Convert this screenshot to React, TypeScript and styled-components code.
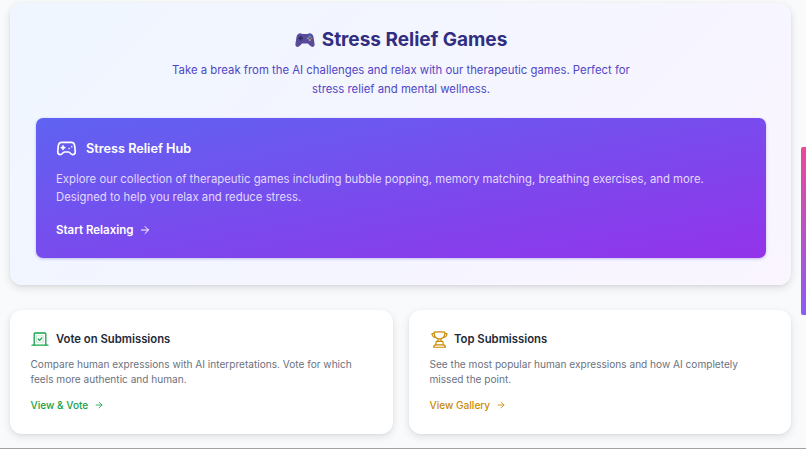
import React from 'react';
import { ArrowRight, Gamepad2 } from 'lucide-react';
import { HiOutlineTrophy } from 'react-icons/hi2';
import styled, { createGlobalStyle } from 'styled-components';

const GlobalStyle = createGlobalStyle`
  html, body {
    margin: 0;
    height: 100%;
    overflow: hidden;
    background: #f9fafb;
  }

  body {
    font-family: Inter, "Liberation Sans", sans-serif;
    -webkit-font-smoothing: antialiased;
  }

  * {
    box-sizing: border-box;
  }
`;

const Page = styled.div`
  position: relative;
  width: 806px;
  height: 449px;
  padding: 3px 15px 0 10px;
  border-bottom: 1px solid #a3a3a3;
  overflow: hidden;
`;

const Hero = styled.section`
  height: 282px;
  padding: 24px 25px 0 26px;
  border-radius: 12px;
  background: linear-gradient(135deg, #eff6ff 0%, #faf5ff 100%);
  box-shadow: 0 3px 8px rgba(15, 23, 42, 0.12), 0 1px 3px rgba(15, 23, 42, 0.06);
`;

const HeroHeader = styled.header`
  display: flex;
  flex-direction: column;
  align-items: center;
  text-align: center;
`;

const HeroTitle = styled.h1`
  display: flex;
  align-items: center;
  gap: 7px;
  margin: 0;
  color: #312e81;
  font-size: 19px;
  line-height: 26px;
  font-weight: 700;
`;

const HeroText = styled.p`
  width: 480px;
  margin: 8px 0 0;
  color: #4f46c5;
  font-size: 11.35px;
  line-height: 18.5px;
`;

const HubCard = styled.a`
  display: block;
  height: 140px;
  margin-top: 20px;
  padding: 20px;
  border-radius: 7px;
  color: #fff;
  background: linear-gradient(to bottom right, #5f63f1 0%, #9333ea 100%);
  box-shadow: 0 1px 3px rgba(67, 56, 202, 0.3);
`;

const CardHead = styled.div<{ $gap: number }>`
  display: flex;
  align-items: center;
  gap: ${({ $gap }) => $gap}px;
`;

const HubTitle = styled.h2`
  margin: 0;
  font-size: 12.7px;
  line-height: 20px;
  font-weight: 600;
`;

const HubText = styled.p`
  margin: 10.5px 0 0;
  color: #e2d9fd;
  font-size: 11.35px;
  line-height: 18px;
`;

const HubLink = styled.span`
  display: flex;
  align-items: center;
  gap: 6px;
  margin-top: 15.5px;
  font-size: 11.5px;
  line-height: 18px;
  font-weight: 600;
`;

const CardGrid = styled.div`
  display: grid;
  grid-template-columns: 383px 382px;
  gap: 16px;
  margin-top: 25px;
`;

const InfoCard = styled.article`
  height: 124px;
  padding: 19px 20px 19px 20.5px;
  border-radius: 12px;
  background: #fff;
  box-shadow: 0 3px 8px rgba(15, 23, 42, 0.1), 0 1px 3px rgba(15, 23, 42, 0.05);
`;

const InfoTitle = styled.h3`
  margin: 0;
  color: #1f2937;
  font-size: 11.3px;
  line-height: 20px;
  font-weight: 600;
`;

const InfoText = styled.p`
  margin: 8px 0 0;
  color: #6b7280;
  font-size: 10.1px;
  line-height: 15.3px;
`;

const InfoLink = styled.span<{ $color: string }>`
  display: flex;
  align-items: center;
  gap: 5.5px;
  margin-top: 9px;
  color: ${({ $color }) => $color};
  font-size: 10.1px;
  line-height: 16px;
  font-weight: 500;
`;

const ScrollThumb = styled.div`
  position: absolute;
  top: 147px;
  right: 0;
  width: 5px;
  height: 168px;
  border-radius: 2px 0 0 2px;
  background: linear-gradient(180deg, #ec4899 0%, #8b5cf6 100%);
`;

function ColorPad (): React.ReactElement {
  return (
    <svg
      height='17'
      viewBox='0 0 20 17'
      width='20'
    >
      <path
        d='M5.4 1.2c1.2 0 1.8.9 2.6.9h4c.8 0 1.4-.9 2.6-.9 2 0 3.3 1.3 3.8 3.3l1.2 7.4c.4 2.5-2.4 4-4.2 2.2l-2.5-2.6H7.100l-2.500 2.600C2.800 15.900 0 14.400.4 11.900l1.200-7.400c.5-2 1.800-3.300 3.800-3.300z'
        fill='#5a4a9c'
      />
      <rect
        fill='#2f2a63'
        height='1.5'
        width='4.6'
        x='3.3'
        y='5.6'
      />
      <rect
        fill='#2f2a63'
        height='4.6'
        width='1.5'
        x='4.85'
        y='4'
      />
      <circle
        cx='14.8'
        cy='4.4'
        fill='#3fb6d8'
        r='0.95'
      />
      <circle
        cx='16.5'
        cy='6.2'
        fill='#e0567f'
        r='0.95'
      />
      <circle
        cx='13.1'
        cy='6.2'
        fill='#58c48a'
        r='0.95'
      />
      <circle
        cx='14.8'
        cy='8'
        fill='#e6b54a'
        r='0.95'
      />
    </svg>
  );
}

function VoteIcon (): React.ReactElement {
  return (
    <svg
      fill='none'
      height='18'
      stroke='#16a34a'
      strokeLinecap='round'
      strokeLinejoin='round'
      strokeWidth='1.3'
      viewBox='0 0 18 18'
      width='18'
    >
      <path d='M3.2 15V3.900c0-.5.4-.9.9-.9h9.800c.5 0 .9.4.9.9V15' />
      <path d='M1 15.2h16' />
      <rect
        height='6.4'
        opacity='0.3'
        strokeWidth='0.8'
        width='6.4'
        x='5.8'
        y='5.8'
      />
      <path d='M7.2 9l1.4 1.4 2.300-2.500' />
    </svg>
  );
}

function App (): React.ReactElement {
  return (
    <Page>
      <GlobalStyle />
      <Hero>
        <HeroHeader>
          <HeroTitle><ColorPad />Stress Relief Games</HeroTitle>
          <HeroText>
            Take a break from the AI challenges and relax with our therapeutic games. Perfect for stress relief and mental wellness.
          </HeroText>
        </HeroHeader>
        <HubCard>
          <CardHead $gap={9}>
            <Gamepad2
              size={21}
              strokeWidth={1.9}
            />
            <HubTitle>Stress Relief Hub</HubTitle>
          </CardHead>
          <HubText>
            Explore our collection of therapeutic games including bubble popping, memory matching, breathing exercises, and more. Designed to help you relax and reduce stress.
          </HubText>
          <HubLink>
            Start Relaxing
            <ArrowRight size={12} />
          </HubLink>
        </HubCard>
      </Hero>
      <CardGrid>
        <InfoCard>
          <CardHead $gap={7.5}>
            <VoteIcon />
            <InfoTitle>Vote on Submissions</InfoTitle>
          </CardHead>
          <InfoText>
            Compare human expressions with AI interpretations. Vote for which feels more authentic and human.
          </InfoText>
          <InfoLink $color='#16a34a'>
            View &amp; Vote
            <ArrowRight size={10} />
          </InfoLink>
        </InfoCard>
        <InfoCard>
          <CardHead $gap={5.5}>
            <HiOutlineTrophy
              color='#ca8a04'
              size={19}
            />
            <InfoTitle>Top Submissions</InfoTitle>
          </CardHead>
          <InfoText>
            See the most popular human expressions and how AI completely missed the point.
          </InfoText>
          <InfoLink $color='#ca8a04'>
            View Gallery
            <ArrowRight size={10} />
          </InfoLink>
        </InfoCard>
      </CardGrid>
      <ScrollThumb />
    </Page>
  );
}

export default App;
